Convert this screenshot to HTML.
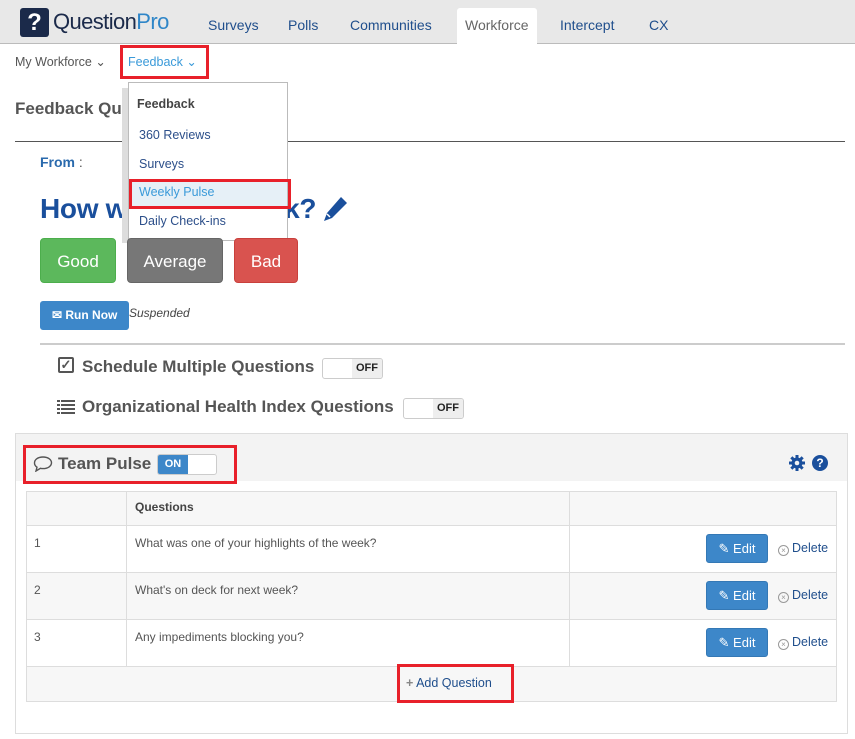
<!DOCTYPE html>
<html><head><meta charset="utf-8"><style>
*{margin:0;padding:0;box-sizing:border-box}
body{width:855px;height:739px;background:#fff;font-family:"Liberation Sans",sans-serif;position:relative;overflow:hidden;color:#555}
.a{position:absolute;white-space:nowrap}
.nav{font-size:14px;color:#1f4e8c;top:17px}
.red{position:absolute;border:3px solid #e8202a}
.dd{font-size:12.5px;color:#2c4f8a;left:139px}
.btn{position:absolute;border-radius:4px;color:#fff;font-size:17px;text-align:center;line-height:45px;top:238px;height:45px}
.tog{position:absolute;width:61px;height:21px;border:1px solid #ccc;border-radius:3px;background:#fff;overflow:hidden}
.tog span{position:absolute;right:0;top:0;width:30px;height:19px;background:#eee;font-size:11px;font-weight:bold;color:#222;text-align:center;line-height:19px}
.h2{font-size:17px;font-weight:bold;color:#555}
.cell{position:absolute;font-size:12px;color:#555}
.edit{position:absolute;left:706px;width:62px;height:29px;background:#3d87c9;border:1px solid #3478b5;border-radius:3px;color:#fff;font-size:13px;line-height:27px;text-align:center}
.del{position:absolute;left:778px;font-size:12.5px;color:#1f4e8c}
.del i{display:inline-block;width:11px;height:11px;border:1px solid #999;border-radius:50%;font-size:8px;line-height:9px;text-align:center;color:#999;font-style:normal;margin-right:3px;vertical-align:-1px}
</style></head><body>
<div class="a" style="left:0;top:0;width:855px;height:44px;background:#e8e8e8;border-bottom:1px solid #bbb"></div>
<div class="a" style="left:20px;top:8px;width:29px;height:29px;background:#1b2a4a;border-radius:3px;color:#fff;font-weight:bold;font-size:24px;text-align:center;line-height:29px">?</div>
<div class="a" style="left:53px;top:9px;font-size:22px;color:#1b2a4a;letter-spacing:-0.6px">Question<span style="color:#2f86c8">Pro</span></div>
<div class="a" style="left:457px;top:8px;width:80px;height:37px;background:#fff;border-radius:3px 3px 0 0"></div>
<div class="a nav" style="left:208px">Surveys</div>
<div class="a nav" style="left:288px">Polls</div>
<div class="a nav" style="left:350px">Communities</div>
<div class="a nav" style="left:465px;color:#666">Workforce</div>
<div class="a nav" style="left:560px">Intercept</div>
<div class="a nav" style="left:649px">CX</div>
<div class="a" style="left:15px;top:54px;font-size:12.5px;color:#555">My Workforce ⌄</div>
<div class="a" style="left:128px;top:54px;font-size:12.5px;color:#3a9ad9">Feedback ⌄</div>
<div class="red" style="left:120px;top:45px;width:89px;height:34px"></div>
<div class="a" style="left:15px;top:99px;font-size:17px;font-weight:bold;color:#555">Feedback Questions</div>
<div class="a" style="left:15px;top:141px;width:830px;height:1px;background:#555"></div>
<div class="a" style="left:40px;top:154px;font-size:14px;font-weight:bold;color:#2a6aad">From <span style="font-weight:normal;color:#555">:</span></div>
<div class="a" style="left:40px;top:193px;font-size:28px;font-weight:bold;color:#1a4f9c;letter-spacing:-0.3px">How was your week?</div>
<svg class="a" style="left:321px;top:196px" width="27" height="27" viewBox="0 0 27 27"><path d="M20 1l6 6-15 15-8 3 3-8z" fill="#1a4f9c"/><path d="M6 18l3 3" stroke="#fff" stroke-width="1.5"/></svg>
<div class="a" style="left:122px;top:88px;width:8px;height:155px;background:#ddd"></div>
<div class="a" style="left:128px;top:82px;width:160px;height:159px;background:#fff;border:1px solid #bbb"></div>
<div class="a dd" style="left:137px;top:97px;font-weight:bold;color:#444">Feedback</div>
<div class="a dd" style="top:128px">360 Reviews</div>
<div class="a dd" style="top:157px">Surveys</div>
<div class="a" style="left:129px;top:181px;width:158px;height:26px;background:#e6f0f7"></div>
<div class="a dd" style="top:185px;color:#3a9ad9">Weekly Pulse</div>
<div class="red" style="left:129px;top:179px;width:162px;height:30px"></div>
<div class="a dd" style="top:214px">Daily Check-ins</div>
<div class="btn" style="left:40px;width:76px;background:#5cb85c;border:1px solid #4cae4c">Good</div>
<div class="btn" style="left:127px;width:96px;background:#777;border:1px solid #666">Average</div>
<div class="btn" style="left:234px;width:64px;background:#d9534f;border:1px solid #c9403c">Bad</div>
<div class="a" style="left:40px;top:301px;width:89px;height:29px;background:#3d87c9;border-radius:3px;color:#fff;font-size:12px;font-weight:bold;line-height:29px;padding-left:12px">✉ Run Now</div>
<div class="a" style="left:129px;top:306px;font-size:12px;font-style:italic;color:#444">Suspended</div>
<div class="a" style="left:40px;top:343px;width:805px;height:2px;background:#ccc"></div>
<div class="a" style="left:58px;top:357px;width:16px;height:16px;border:2px solid #555;border-radius:2px;font-size:13px;line-height:12px;font-weight:bold;color:#555;text-align:center">✓</div>
<div class="a h2" style="left:82px;top:357px">Schedule Multiple Questions</div>
<div class="tog" style="left:322px;top:358px"><span>OFF</span></div>
<svg class="a" style="left:57px;top:400px" width="18" height="14"><g fill="#555"><rect x="0" y="0" width="3" height="2"/><rect x="4" y="0" width="14" height="2"/><rect x="0" y="4" width="3" height="2"/><rect x="4" y="4" width="14" height="2"/><rect x="0" y="8" width="3" height="2"/><rect x="4" y="8" width="14" height="2"/><rect x="0" y="12" width="3" height="2"/><rect x="4" y="12" width="14" height="2"/></g></svg>
<div class="a h2" style="left:82px;top:397px">Organizational Health Index Questions</div>
<div class="tog" style="left:403px;top:398px"><span>OFF</span></div>
<div class="a" style="left:15px;top:433px;width:833px;height:301px;border:1px solid #ddd;background:#fff"></div>
<div class="a" style="left:16px;top:434px;width:831px;height:47px;background:#f3f3f3"></div>
<svg class="a" style="left:33px;top:456px" width="20" height="16" viewBox="0 0 20 16"><path d="M10 1C5 1 1.5 3.6 1.5 7c0 1.7 1 3.2 2.5 4.2L3 15l4.5-2.7c.8.2 1.6.3 2.5.3 5 0 8.5-2.6 8.5-5.8S15 1 10 1z" fill="none" stroke="#555" stroke-width="1.4"/></svg>
<div class="a h2" style="left:58px;top:454px">Team Pulse</div>
<div class="a" style="left:157px;top:454px;width:60px;height:21px;border:1px solid #ccc;border-radius:3px;background:#fff;overflow:hidden"><span style="position:absolute;left:0;top:0;width:30px;height:19px;background:#3d87c9;color:#fff;font-size:11px;font-weight:bold;text-align:center;line-height:19px">ON</span></div>
<div class="red" style="left:23px;top:445px;width:214px;height:39px"></div>
<svg class="a" style="left:789px;top:455px" width="16" height="16" viewBox="0 0 16 16"><g fill="#1a4f9c"><circle cx="8" cy="8" r="5.5"/><rect x="6.5" y="0" width="3" height="16"/><rect x="0" y="6.5" width="16" height="3"/><rect x="6.5" y="0" width="3" height="16" transform="rotate(45 8 8)"/><rect x="6.5" y="0" width="3" height="16" transform="rotate(-45 8 8)"/></g><circle cx="8" cy="8" r="2.3" fill="#f3f3f3"/></svg>
<div class="a" style="left:812px;top:455px;width:16px;height:16px;border-radius:50%;background:#1a4f9c;color:#fff;font-size:12px;font-weight:bold;text-align:center;line-height:16px">?</div>
<div class="a" style="left:26px;top:491px;width:811px;height:211px;border:1px solid #ddd;background:#fff"></div>
<div class="a" style="left:27px;top:492px;width:809px;height:33px;background:#f7f7f7"></div>
<div class="a" style="left:27px;top:572px;width:809px;height:47px;background:#f7f7f7"></div>
<div class="a" style="left:27px;top:666px;width:809px;height:35px;background:#f7f7f7"></div>
<div class="a" style="left:27px;top:525px;width:809px;height:1px;background:#ddd"></div>
<div class="a" style="left:27px;top:572px;width:809px;height:1px;background:#ddd"></div>
<div class="a" style="left:27px;top:619px;width:809px;height:1px;background:#ddd"></div>
<div class="a" style="left:27px;top:666px;width:809px;height:1px;background:#ddd"></div>
<div class="a" style="left:126px;top:492px;width:1px;height:174px;background:#ddd"></div>
<div class="a" style="left:569px;top:492px;width:1px;height:174px;background:#ddd"></div>
<div class="cell" style="left:135px;top:500px;font-weight:bold;color:#444">Questions</div>
<div class="cell" style="left:34px;top:536px">1</div>
<div class="cell" style="left:135px;top:536px">What was one of your highlights of the week?</div>
<div class="cell" style="left:34px;top:583px">2</div>
<div class="cell" style="left:135px;top:583px">What's on deck for next week?</div>
<div class="cell" style="left:34px;top:630px">3</div>
<div class="cell" style="left:135px;top:630px">Any impediments blocking you?</div>
<div class="edit" style="top:534px">✎ Edit</div><div class="a del" style="top:541px"><i>×</i>Delete</div>
<div class="edit" style="top:581px">✎ Edit</div><div class="a del" style="top:588px"><i>×</i>Delete</div>
<div class="edit" style="top:628px">✎ Edit</div><div class="a del" style="top:635px"><i>×</i>Delete</div>
<div class="a" style="left:406px;top:676px;font-size:12.5px;color:#1f4e8c"><span style="color:#888;font-weight:bold">+</span> Add Question</div>
<div class="red" style="left:397px;top:664px;width:117px;height:39px"></div>
</body></html>
